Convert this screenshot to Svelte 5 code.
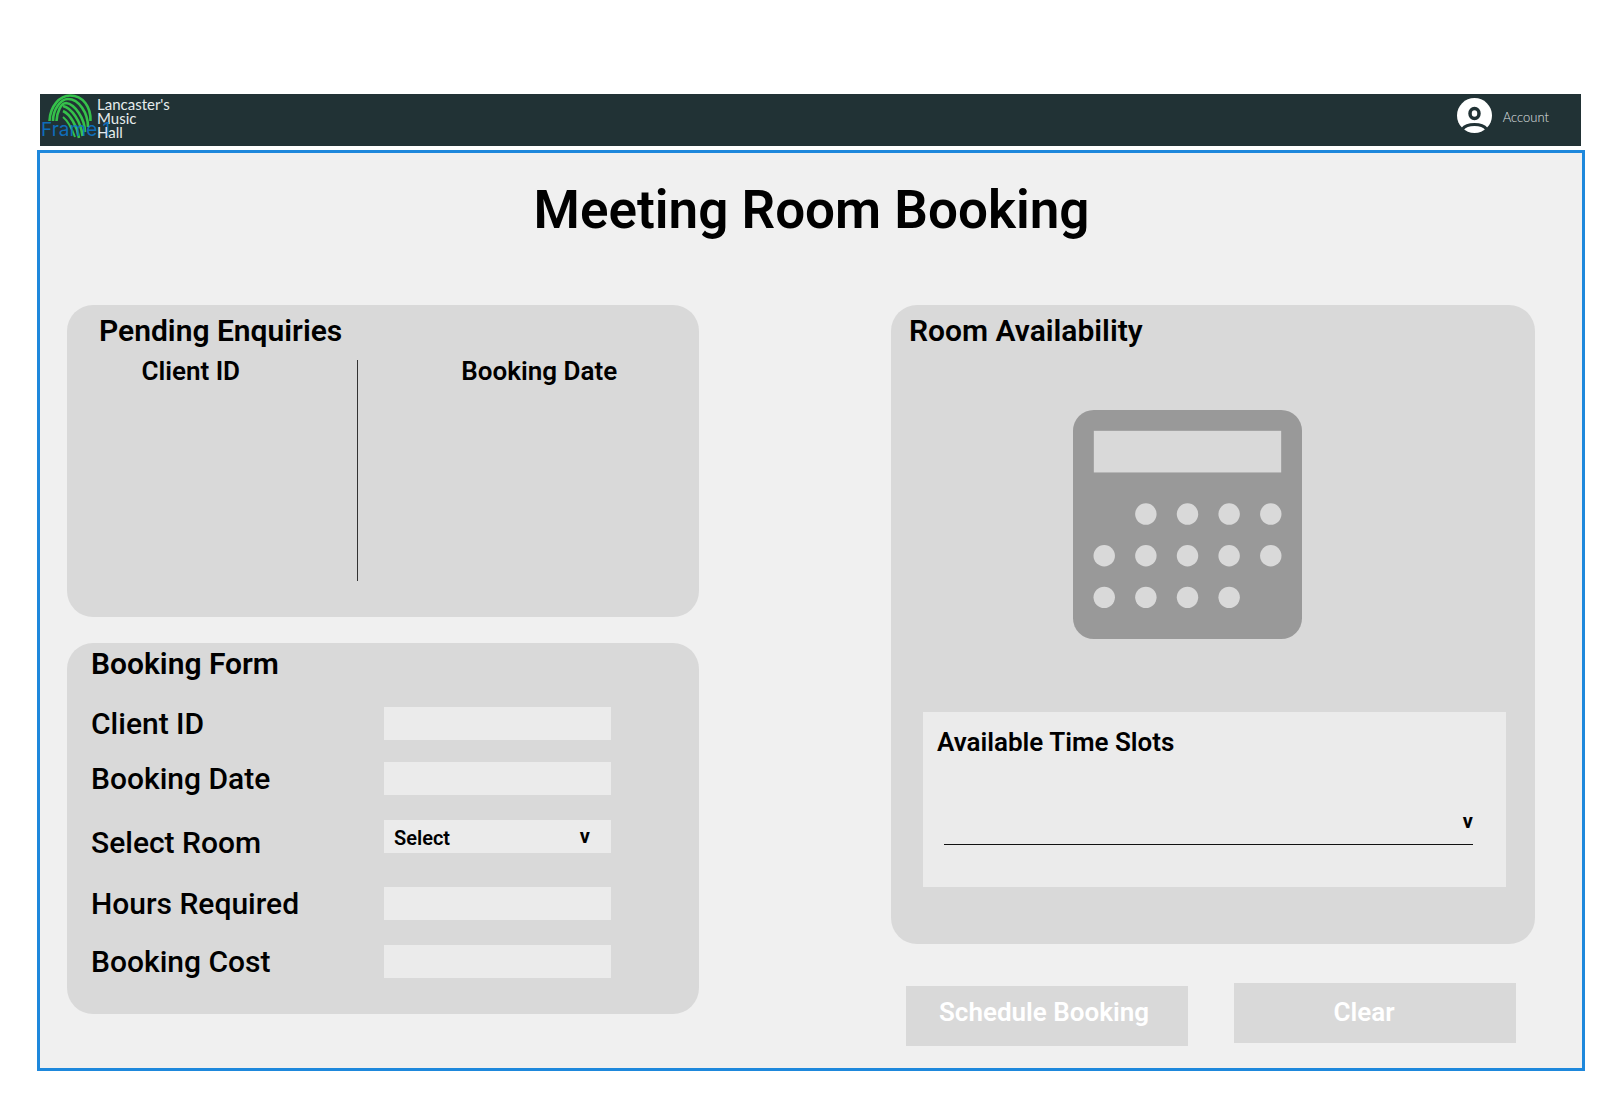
<script>
  let clientId = $state('');
  let bookingDate = $state('');
  let room = $state('');
  let hours = $state('');
  let cost = $state('');
  let slot = $state('');

  const dots = [
    [1, 0], [2, 0], [3, 0], [4, 0],
    [0, 1], [1, 1], [2, 1], [3, 1], [4, 1],
    [0, 2], [1, 2], [2, 2], [3, 2],
  ];

  function clearForm() {
    clientId = bookingDate = room = hours = cost = slot = '';
  }
</script>

<div class="page">
  <header class="topbar">
    <a class="brand" href="#home">
      <svg class="logo" viewBox="0 0 46 46" aria-hidden="true">
        <g fill="none" stroke="#35c14a" stroke-width="2.600">
          <path d="M1.500 27C2 12 12 1.500 22 1.500C35 1.500 43 13 42.500 27" />
          <path d="M5 27C5 15 13 5 20 5C31 5 40 19 40 33" />
          <path d="M8.500 27C9 18 13 9 18 9C27 10 37 25 37 38" />
          <path d="M15 12C24 14 33 28 34.500 42" />
          <path d="M15 17C22 20 29 32 31 44" />
          <path d="M15 23C20 27 24 35 27 43" stroke-width="2" />
        </g>
      </svg>
      <span class="brand-name">Lancaster's<br />Music<br />Hall</span>
      <span class="frame-tag">Frame 1</span>
    </a>
    <a class="account" href="#account">
      <svg class="avatar" viewBox="0 0 35 35" aria-hidden="true">
        <circle cx="17.500" cy="17.500" r="17.500" fill="#fff" />
        <ellipse cx="17.500" cy="15.500" rx="4.500" ry="5" fill="none" stroke="#213235" stroke-width="3.500" />
        <path d="M5.500 31C10 25 25 25 29.500 31" fill="none" stroke="#213235" stroke-width="3" />
      </svg>
      <span>Account</span>
    </a>
  </header>

  <main class="frame">
    <h1>Meeting Room Booking</h1>

    <div class="columns">
      <div class="left">
        <section class="panel pending">
          <h2>Pending Enquiries</h2>
          <table>
            <thead>
              <tr><th scope="col">Client ID</th><th scope="col">Booking Date</th></tr>
            </thead>
            <tbody>
              <tr><td></td><td></td></tr>
            </tbody>
          </table>
        </section>

        <section class="panel booking">
          <h2>Booking Form</h2>
          <form id="booking-form" class="fields">
            <label for="client">Client ID</label>
            <input id="client" type="text" bind:value={clientId} />
            <label for="date">Booking Date</label>
            <input id="date" type="text" bind:value={bookingDate} />
            <label class="room-label" for="room">Select Room</label>
            <div class="dropdown">
              <select id="room" bind:value={room}>
                <option value="">Select</option>
              </select>
              <span class="arrow" aria-hidden="true">v</span>
            </div>
            <label for="hours">Hours Required</label>
            <input id="hours" type="text" bind:value={hours} />
            <label for="cost">Booking Cost</label>
            <input id="cost" type="text" bind:value={cost} />
          </form>
        </section>
      </div>

      <div class="right">
        <section class="panel availability">
          <h2>Room Availability</h2>
          <svg class="calculator" viewBox="0 0 220 220" aria-hidden="true">
            <rect width="220" height="220" rx="20" fill="#999" />
            <rect x="20" y="20" width="180" height="40" fill="#d9d9d9" />
            {#each dots as [col, row]}
              <circle cx={30 + col * 40} cy={100 + row * 40} r="10.300" fill="#d9d9d9" />
            {/each}
          </svg>
          <div class="slots">
            <label for="slot">Available Time Slots</label>
            <div class="dropdown underlined">
              <select id="slot" bind:value={slot}>
                <option value=""></option>
              </select>
              <span class="arrow" aria-hidden="true">v</span>
            </div>
          </div>
        </section>

        <div class="actions">
          <button class="schedule" type="submit" form="booking-form">Schedule Booking</button>
          <button class="clear" type="button" onclick={clearForm}>Clear</button>
        </div>
      </div>
    </div>
  </main>
</div>

<style>
  :global(body) {
    margin: 0;
    background: #fff;
  }

  .page {
    box-sizing: border-box;
    padding: 94px 15px 46px 37px;
    font-family: Roboto, 'Liberation Sans', sans-serif;
    font-weight: 600;
    color: #000;
  }

  .topbar {
    display: flex;
    justify-content: space-between;
    align-items: flex-start;
    height: 52px;
    margin: 0 4px 4px 3px;
    padding-right: 32px;
    background: #213235;
    font-family: Lato, sans-serif;
    font-weight: 400;
  }

  .brand {
    position: relative;
    display: flex;
    align-items: flex-start;
    gap: 3px;
    padding-left: 8px;
    color: #e6ecec;
    text-decoration: none;
  }

  .logo {
    width: 46px;
    height: 46px;
  }

  .brand-name {
    padding-top: 3px;
    font-size: 15px;
    line-height: 14px;
  }

  .frame-tag {
    position: absolute;
    left: 1px;
    top: 25px;
    font: 400 19px/22px Inter, sans-serif;
    color: #0d78d0;
    opacity: 0.85;
  }

  .account {
    display: flex;
    align-items: center;
    gap: 11px;
    margin-top: 4px;
    font-size: 13px;
    font-weight: 300;
    color: #e0e6e6;
    text-decoration: none;
  }

  .account span {
    padding-top: 2px;
  }

  .avatar {
    width: 35px;
    height: 35px;
  }

  .frame {
    border: 3px solid #1e88dc;
    padding: 27px 47px 22px 27px;
    background: #f0f0f0;
  }

  h1 {
    margin: 0 0 65px;
    padding-left: 21px;
    font-size: 53px;
    line-height: 60px;
    font-weight: 600;
    text-align: center;
  }

  h2 {
    margin: 0;
    font-size: 30px;
    line-height: 36px;
    font-weight: 600;
  }

  .columns {
    display: grid;
    grid-template-columns: 632fr 192fr 644fr;
  }

  .left {
    display: flex;
    flex-direction: column;
    gap: 26px;
  }

  .right {
    grid-column: 3;
  }

  .panel {
    box-sizing: border-box;
    border-radius: 26px;
    background: #d9d9d9;
  }

  .pending {
    padding: 8px 32px 36px;
  }

  table {
    width: 100%;
    margin-top: 11px;
    border-collapse: collapse;
    table-layout: fixed;
  }

  th {
    box-sizing: border-box;
    height: 26px;
    padding: 0 0 4px 54px;
    font-size: 26px;
    line-height: 22px;
    font-weight: 600;
  }

  th:first-child,
  td:first-child {
    width: 258px;
    border-right: 1px solid #333;
  }

  th:first-child {
    padding: 0 74px 4px 0;
  }

  td {
    height: 195px;
    padding: 0;
  }

  .booking {
    padding: 3px 24px 36px;
  }

  .fields {
    display: grid;
    grid-template-columns: 293px minmax(0, 227px);
    grid-template-rows: 55px 58px 67px 58px 33px;
    align-items: start;
    margin-top: 25px;
  }

  .fields label {
    font-size: 30px;
    line-height: 34px;
    font-weight: 500;
  }

  .fields .room-label {
    padding-top: 6px;
  }

  input,
  select {
    box-sizing: border-box;
    width: 100%;
    height: 33px;
    margin: 0;
    padding: 0 10px;
    border: 0;
    border-radius: 0;
    background: #ebebeb;
    font: 600 20px/33px Roboto, 'Liberation Sans', sans-serif;
    color: #000;
    appearance: none;
  }

  .dropdown select {
    padding-top: 2px;
  }

  .dropdown {
    position: relative;
  }

  .arrow {
    position: absolute;
    right: 21px;
    top: 0;
    font-size: 20px;
    line-height: 32px;
    font-weight: 700;
    pointer-events: none;
  }

  .availability {
    display: flex;
    flex-direction: column;
    padding: 8px 29px 57px 32px;
  }

  .availability h2 {
    margin-left: -14px;
  }

  .calculator {
    width: 229px;
    height: 229px;
    margin: 61px 54px 73px 0;
    align-self: center;
  }

  .slots {
    padding: 15px 33px 42px 21px;
    background: #ebebeb;
  }

  .slots label {
    display: block;
    margin: 0 0 39px -7px;
    font-size: 26px;
    line-height: 30px;
    font-weight: 600;
  }

  .underlined {
    border-bottom: 1px solid #111;
  }

  .underlined select {
    height: 48px;
  }

  .underlined .arrow {
    right: 0;
    top: 9px;
  }

  .actions {
    display: grid;
    grid-template-columns: 1fr 1fr;
    gap: 46px;
    margin: 39px 19px 0 15px;
  }

  button {
    height: 60px;
    margin: 0;
    border: 0;
    background: #d9d9d9;
    color: #fff;
    font: 600 26px/30px Roboto, 'Liberation Sans', sans-serif;
  }

  .schedule {
    margin-top: 3px;
    padding: 0 6px 9px 0;
  }

  .clear {
    padding: 0 22px 3px 0;
  }
</style>
